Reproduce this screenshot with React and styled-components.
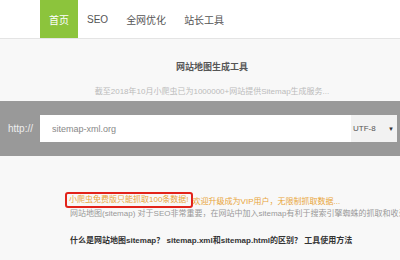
import React from 'react'
import styled, { createGlobalStyle } from 'styled-components'

const GlobalStyle = createGlobalStyle`
  html, body {
    margin: 0;
    padding: 0;
    background: #f8f8f8;
  }
  body {
    width: 400px;
    height: 260px;
    overflow: hidden;
    font-family: "Liberation Sans", "Noto Sans CJK SC", sans-serif;
  }
`

const Nav = styled.nav`
  display: flex;
  height: 38px;
  padding-left: 40px;
  background: #fff;
  border-bottom: 1px solid #e4e4e4;
`

const NavItem = styled.a`
  display: flex;
  align-items: center;
  padding: 0 9px;
  font-size: 10px;
  color: ${p => (p.$active ? '#fff' : '#555')};
  background: ${p => (p.$active ? '#8cc43c' : 'transparent')};
  text-decoration: none;
`

const Header = styled.header`
  height: 62px;
  padding: 21px 0 0 24px;
  box-sizing: border-box;
  text-align: center;
`

const Title = styled.h1`
  margin: 0;
  font-size: 9px;
  line-height: 14px;
  font-weight: 700;
  color: #555;
`

const Subtitle = styled.p`
  margin: 12px 0 0;
  font-size: 8px;
  line-height: 12px;
  color: #bbb;
`

const Band = styled.form`
  display: flex;
  align-items: center;
  height: 55px;
  padding: 0 3px 0 8px;
  background: #999;
`

const Prefix = styled.span`
  width: 32px;
  font-size: 10px;
  color: #eee;
`

const UrlInput = styled.input`
  width: 311px;
  height: 27px;
  box-sizing: border-box;
  padding: 0 0 0 12px;
  border: 0;
  outline: none;
  background: #fff;
  font-family: inherit;
  font-size: 9px;
  color: #888;
`

const Charset = styled.div`
  display: flex;
  align-items: center;
  justify-content: space-between;
  width: 46px;
  height: 27px;
  box-sizing: border-box;
  padding: 0 3px 0 2px;
  background: #f2f2f2;
  font-size: 8px;
  color: #555;
`

const Arrow = styled.span`
  font-size: 6px;
  color: #333;
`

const Content = styled.section`
  padding: 36px 0 0 70px;
  white-space: nowrap;
`

const Notice = styled.div`
  display: flex;
  align-items: center;
  height: 16px;
  margin-left: -5px;
  font-size: 8px;
  color: #e8a53a;
`

const Highlight = styled.span`
  display: inline-block;
  height: 16px;
  box-sizing: border-box;
  padding: 0 2px;
  border: 2px solid #e2231a;
  border-radius: 3px;
  line-height: 12px;
`

const Desc = styled.p`
  margin: 0;
  font-size: 8px;
  line-height: 12px;
  color: #999;
`

const Links = styled.p`
  margin: 15px 0 0;
  font-size: 8px;
  line-height: 12px;
  font-weight: 700;
  color: #333;
`

const App = () => (
  <>
    <GlobalStyle />
    <Nav>
      <NavItem $active>首页</NavItem>
      <NavItem>SEO</NavItem>
      <NavItem>全网优化</NavItem>
      <NavItem>站长工具</NavItem>
    </Nav>
    <Header>
      <Title>网站地图生成工具</Title>
      <Subtitle>截至2018年10月小爬虫已为1000000+网站提供Sitemap生成服务...</Subtitle>
    </Header>
    <Band>
      <Prefix>http://</Prefix>
      <UrlInput defaultValue='sitemap-xml.org' />
      <Charset>
        UTF-8
        <Arrow>▼</Arrow>
      </Charset>
    </Band>
    <Content>
      <Notice>
        <Highlight>小爬虫免费版只能抓取100条数据!</Highlight>
        欢迎升级成为VIP用户，无限制抓取数据...
      </Notice>
      <Desc>网站地图(sitemap) 对于SEO非常重要，在网站中加入sitemap有利于搜索引擎蜘蛛的抓取和收录...</Desc>
      <Links>什么是网站地图sitemap？ sitemap.xml和sitemap.html的区别？ 工具使用方法</Links>
    </Content>
  </>
)

export default App
